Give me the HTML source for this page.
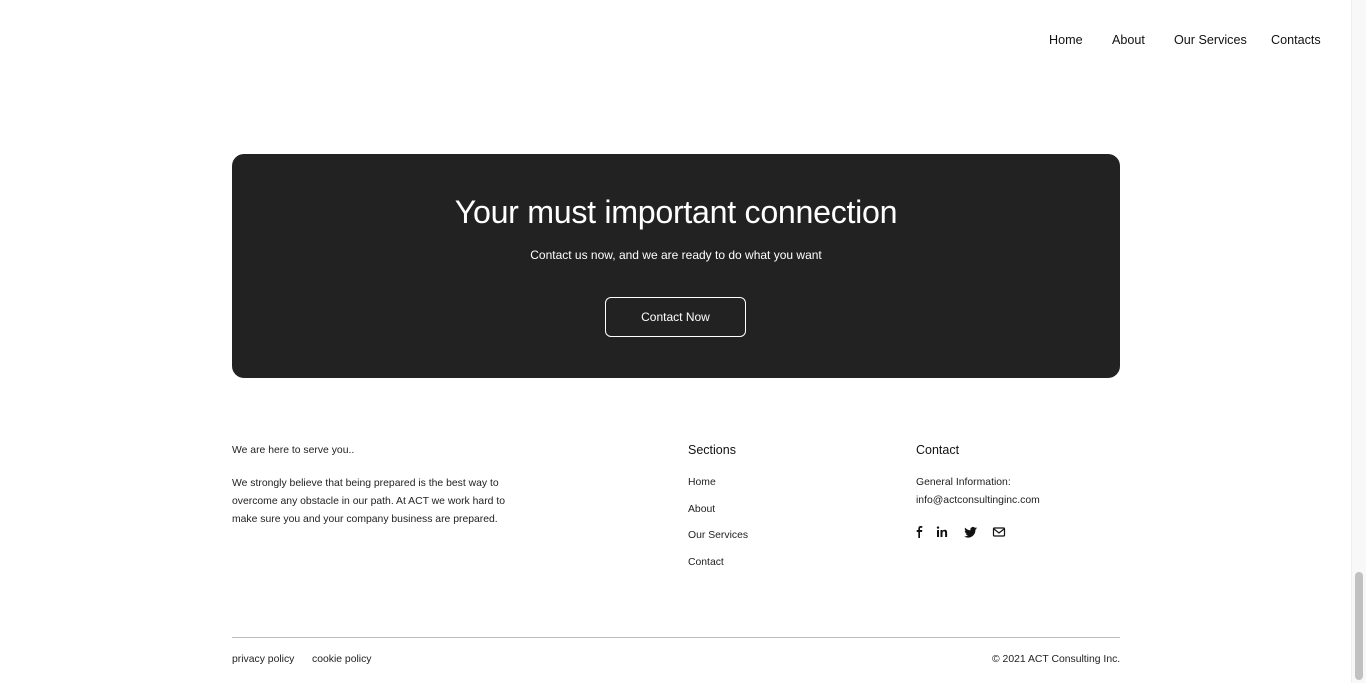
<!DOCTYPE html>
<html><head><style>
*{margin:0;padding:0;box-sizing:border-box}
body{width:1366px;height:683px;overflow:hidden;background:#fff;font-family:"Liberation Sans",sans-serif;color:#222;position:relative}
.a{position:absolute;white-space:nowrap}
.nav{font-size:12.6px;top:33px;color:#111}
.box{position:absolute;left:232px;top:154px;width:888px;height:224px;background:#222;border-radius:12px;color:#fff;text-align:center}
.box h1{font-weight:400;font-size:32.2px;margin-top:40px;letter-spacing:-0.3px}
.box p{font-size:12px;margin-top:17px}
.btn{position:absolute;left:373px;top:143px;width:141px;height:40px;border:1px solid #fff;border-radius:6px;font-size:12px;line-height:38px}
.s{font-size:10.4px;color:#222}
.h{font-size:12.5px;color:#111}
.sb{position:absolute;left:1351px;top:0;width:15px;height:683px;background:#f8f8f8;border-left:1px solid #eee}
.th{position:absolute;left:1355px;top:572px;width:8px;height:108px;background:#c1c1c1;border-radius:4px}
</style></head><body>
<div class="a nav" style="left:1049px">Home</div>
<div class="a nav" style="left:1112px">About</div>
<div class="a nav" style="left:1174px">Our Services</div>
<div class="a nav" style="left:1271px">Contacts</div>
<div class="box"><h1>Your must important connection</h1><p>Contact us now, and we are ready to do what you want</p><div class="btn">Contact Now</div></div>
<div class="a s" style="left:232px;top:445px">We are here to serve you..</div>
<div class="a s" style="left:232px;top:475px;line-height:18px">We strongly believe that being prepared is the best way to<br>overcome any obstacle in our path. At ACT we work hard to<br>make sure you and your company business are prepared.</div>
<div class="a h" style="left:688px;top:443px">Sections</div>
<div class="a s" style="left:688px;top:477px">Home</div>
<div class="a s" style="left:688px;top:504px">About</div>
<div class="a s" style="left:688px;top:530px">Our Services</div>
<div class="a s" style="left:688px;top:557px">Contact</div>
<div class="a h" style="left:916px;top:443px">Contact</div>
<div class="a s" style="left:916px;top:474px;line-height:18px">General Information:<br>info@actconsultinginc.com</div>
<svg class="a" style="left:914px;top:525px" width="100" height="14" viewBox="0 0 100 14">
<path d="M6 13V7H8l.3-2H6V3.8c0-.6.2-1 1-1h1.3V1.1C8 1 7.4 1 6.8 1 5.3 1 4.3 1.9 4.3 3.6V5H2.7v2h1.6v6z" fill="#111"/>
<g fill="#111"><rect x="23" y="5" width="2" height="7"/><circle cx="24" cy="2.6" r="1.2"/><path d="M26.5 5h2v1c.5-.8 1.3-1.2 2.3-1.2 1.6 0 2.3 1 2.3 2.8V12h-2V7.9c0-1-.3-1.5-1.1-1.5s-1.5.6-1.5 1.6V12h-2z"/></g>
<path d="M63 3.3c-.5.2-1 .4-1.5.4.6-.3 1-.9 1.2-1.5-.5.3-1.1.5-1.7.7a2.6 2.6 0 0 0-4.5 2.4C54.3 5.2 52.4 4.2 51.1 2.6c-.7 1.2-.3 2.7.8 3.500-.4 0-.8-.1-1.2-.3 0 1.3.9 2.400 2.100 2.600-.4.1-.8.1-1.200.1.3 1.1 1.300 1.800 2.400 1.800A5.300 5.300 0 0 1 50 11.400 7.400 7.400 0 0 0 61.400 4.800c.6-.4 1.100-.9 1.600-1.500z" fill="#111"/>
<rect x="79.5" y="3" width="11" height="8" rx="1" fill="none" stroke="#111" stroke-width="1.2"/><path d="M80 4l5 4 5-4" fill="none" stroke="#111" stroke-width="1.2"/>
</svg>
<div class="a" style="left:232px;top:637px;width:888px;height:1px;background:#bbb"></div>
<div class="a s" style="left:232px;top:654px">privacy policy</div>
<div class="a s" style="left:312px;top:654px">cookie policy</div>
<div class="a s" style="left:992px;top:654px">© 2021 ACT Consulting Inc.</div>
<div class="sb"></div><div class="th"></div>
</body></html>
